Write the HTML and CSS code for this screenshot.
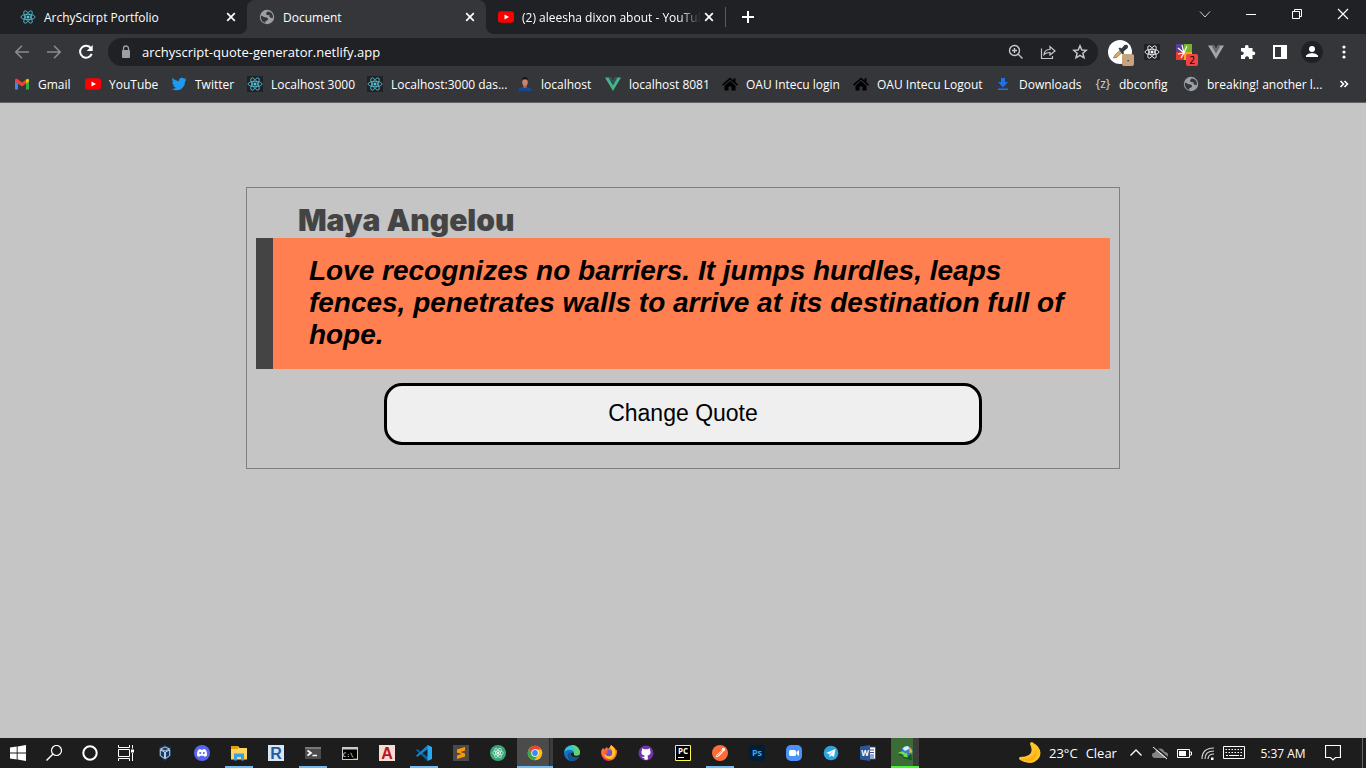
FILE: index.html
```html
<!DOCTYPE html>
<html lang="en">
<head>
<meta charset="utf-8">
<meta name="viewport" content="width=device-width, initial-scale=1">
<title>Document</title>
<link rel="stylesheet" href="styles.css">
</head>
<body>
<svg class="sprite" aria-hidden="true">
  <symbol id="react" viewBox="0 0 16 16"><g fill="none" stroke="currentColor" stroke-width=".8"><ellipse cx="8" cy="8" rx="7" ry="2.7"/><ellipse cx="8" cy="8" rx="7" ry="2.7" transform="rotate(60 8 8)"/><ellipse cx="8" cy="8" rx="7" ry="2.7" transform="rotate(120 8 8)"/></g><circle cx="8" cy="8" r="1.5" fill="currentColor"/></symbol>
  <symbol id="globe" viewBox="0 0 16 16"><circle cx="8" cy="8" r="7.2" fill="#9aa0a6"/><path d="M2.500 6.500Q5 8.500 7.500 8.500Q9.500 9 9 10.500Q8 12 6 12.500Q6 14 7.500 14.500Q2 13 1.700 8ZM8.500 2.500Q6.500 4 7.200 5.500Q8.500 6.500 10.500 6Q10 8 11.500 8.800L14 9Q14.500 6 12.500 4Q10.500 2 8.500 2.500Z" fill="#35363a"/></symbol>
  <symbol id="youtube" viewBox="0 0 16 16"><rect y="2.300" width="16" height="11.400" rx="3" fill="#f00"/><path d="M6.500 5.500 11 8 6.500 10.500Z" fill="#fff"/></symbol>
  <symbol id="close" viewBox="0 0 16 16"><path d="M4.200 4.200 11.800 11.800M11.800 4.200 4.200 11.800" stroke="#fff" stroke-width="1.700"/></symbol>
  <symbol id="house" viewBox="0 0 16 16"><path d="M8 1.500 0 8.500 1 9.700 8 3.800 15 9.700 16 8.500 13.500 6.300V2.300H11.500V4.500ZM8 5 2.500 9.700V14.500H6.500V10.500H9.500V14.500H13.500V9.700Z" fill="#000"/></symbol>
</svg>

<header class="browser">
  <div class="tabstrip">
    <div class="tab"><svg class="icon cyan"><use href="#react"/></svg><span class="tab-title">ArchyScirpt Portfolio</span><button class="tab-close" aria-label="Close ArchyScirpt Portfolio"><svg class="icon"><use href="#close"/></svg></button></div>
    <div class="tab active"><svg class="icon"><use href="#globe"/></svg><span class="tab-title">Document</span><button class="tab-close" aria-label="Close Document"><svg class="icon"><use href="#close"/></svg></button></div>
    <div class="tab"><svg class="icon"><use href="#youtube"/></svg><span class="tab-title faded">(2) aleesha dixon about - YouTub</span><button class="tab-close" aria-label="Close YouTube"><svg class="icon"><use href="#close"/></svg></button></div>
    <button class="new-tab" aria-label="New tab"><svg class="icon" viewBox="0 0 16 16"><path d="M8 2V14M2 8H14" stroke="#fff" stroke-width="2"/></svg></button>
    <div class="window-controls">
      <button aria-label="Search tabs"><svg class="icon" viewBox="0 0 16 16"><path d="M3 5.500 8 11 13 5.500" stroke="#ccc" fill="none"/></svg></button>
      <button aria-label="Minimize"><svg class="icon" viewBox="0 0 16 16"><path d="M3 8.500H13" stroke="#fff"/></svg></button>
      <button aria-label="Restore"><svg class="icon" viewBox="0 0 16 16"><path d="M3.500 5.500H10.500V12.500H3.500ZM5.500 5.500V3.500H12.500V10.500H10.500" stroke="#fff" fill="none"/></svg></button>
      <button aria-label="Close window"><svg class="icon" viewBox="0 0 16 16"><path d="M3 3 13 13M13 3 3 13" stroke="#fff" stroke-width="1.200"/></svg></button>
    </div>
  </div>

  <div class="toolbar">
    <div class="tools">
      <button aria-label="Back"><svg class="icon" viewBox="0 0 16 16"><path d="M15 8H2M8 1.800 1.800 8 8 14.200" stroke="#898b8f" stroke-width="1.600" fill="none"/></svg></button>
      <button aria-label="Forward"><svg class="icon" viewBox="0 0 16 16"><path d="M1 8H14M8 1.800 14.200 8 8 14.200" stroke="#898b8f" stroke-width="1.600" fill="none"/></svg></button>
      <button aria-label="Reload"><svg class="icon" viewBox="0 0 16 16"><path d="M13 4.300A6 6 0 1 0 13.700 9.800" stroke="#fff" stroke-width="2" fill="none"/><path d="M14.700 1V7H8.700Z" fill="#fff"/></svg></button>
    </div>
    <div class="omnibox">
      <svg class="icon lock" viewBox="0 0 16 16"><rect x="4" y="6" width="8" height="8" rx="1" fill="#9aa0a6"/><path d="M5.500 7V4.500A2.500 2.500 0 0 1 10.500 4.500V7" stroke="#9aa0a6" stroke-width="1.300" fill="none"/></svg>
      <input type="text" aria-label="Address" value="archyscript-quote-generator.netlify.app">
      <div class="tools">
        <button aria-label="Zoom"><svg class="icon" viewBox="0 0 16 16"><circle cx="6.500" cy="6.500" r="5" stroke="#c4c7ca" stroke-width="1.400" fill="none"/><path d="M10 10 14.500 14.500M4 6.500H9M6.500 4V9" stroke="#c4c7ca" stroke-width="1.400"/></svg></button>
        <button aria-label="Share"><svg class="icon" viewBox="0 0 16 16"><path d="M1.500 4.500V14.500H12.500V12M4 10.500Q4.500 5.500 10 5.500V2.500L15 7 10 11V8.500Q6 8.500 4 10.500Z" stroke="#c4c7ca" stroke-width="1.200" fill="none"/></svg></button>
        <button aria-label="Bookmark"><svg class="icon" viewBox="0 0 16 16"><path d="M8 1.800 9.800 6 14.300 6.300 10.900 9.300 12 13.800 8 11.400 4 13.800 5.100 9.300 1.700 6.300 6.200 6Z" stroke="#c4c7ca" stroke-width="1.500" fill="none"/></svg></button>
      </div>
    </div>
    <div class="tools">
      <button aria-label="Color picker"><svg class="icon big" viewBox="0 0 24 24"><circle cx="12" cy="12" r="12" fill="#fff"/><path d="M5.500 18 7 15 12 10.500 14 12.500 9 17.200Z" fill="#e8a94e" stroke="#777" stroke-width=".8"/><path d="M10.500 8.500 12 7.500 13.500 8.500 16.500 5Q19 4 20 6Q20.500 8 18 9.500L15.500 11.500 16 13.500 14.500 14.500Z" fill="#343b46"/></svg><span class="badge tan">·</span></button>
      <button aria-label="React tools"><svg class="icon tile white"><use href="#react"/></svg></button>
      <button aria-label="Color extension"><svg class="icon" viewBox="0 0 16 16"><path d="M0 0H8V8H0Z" fill="#564099"/><path d="M8 0H16V8H8Z" fill="#73b52b"/><path d="M0 8H8V16H0Z" fill="#e5383b"/><path d="M8 8H16V16H8Z" fill="#f5a623"/><path d="M8 9 2 4M8 9 6 1M8 9 11 2M8 9 2 10M8 9 5 14" stroke="#fff" stroke-width="1.200"/></svg><span class="badge red">2</span></button>
      <button aria-label="Vue tools"><svg class="icon" viewBox="0 0 16 16"><path d="M0 1.500H6L8 5 10 1.500H16L8 15Z" fill="#a5a5a5"/><path d="M3.500 1.500H6L8 5 10 1.500H12.500L8 9.500Z" fill="#686868"/></svg></button>
      <button aria-label="Extensions"><svg class="icon" viewBox="0 0 16 16"><path d="M1 4H5Q4.500 1 6.800 1Q9 1 8.500 4H12.500V7.500Q15.300 7 15.300 9.200Q15.300 11.500 12.500 11V15H9Q9.200 12.300 7 12.300Q4.800 12.300 5 15H1V11Q3.700 11.300 3.700 9.200Q3.700 7 1 7.500Z" fill="#fff"/></svg></button>
      <button aria-label="Side panel"><svg class="icon" viewBox="0 0 16 16"><path fill-rule="evenodd" d="M1 1H15V15H1ZM3 3V13H9V3Z" fill="#fff"/></svg></button>
      <button aria-label="Profile"><svg class="icon profile" viewBox="0 0 22 22"><circle cx="11" cy="11" r="11" fill="#202124"/><circle cx="11" cy="8" r="3" fill="#fff"/><path d="M5 16V14.500Q7 12 11 12T17 14.500V16Z" fill="#fff"/></svg></button>
      <button aria-label="Menu"><svg class="icon" viewBox="0 0 16 16"><g fill="#fff"><circle cx="8" cy="3" r="1.600"/><circle cx="8" cy="8" r="1.600"/><circle cx="8" cy="13" r="1.600"/></g></svg></button>
    </div>
  </div>

  <nav class="bookmarks" aria-label="Bookmarks">
    <a href="#"><svg class="icon" viewBox="0 0 16 16"><path d="M1 4V13.500H4V7Z" fill="#4285f4"/><path d="M12 7V13.500H15V4Z" fill="#34a853"/><path d="M1 4Q1.500 1.500 3.500 3L8 6.500 12 3.500V7.500L8 10.500 1 5.500Z" fill="#ea4335"/><path d="M12 3.500Q15 1.500 15 4.500V5.500L12 7.500Z" fill="#fbbc04"/></svg>Gmail</a>
    <a href="#"><svg class="icon"><use href="#youtube"/></svg>YouTube</a>
    <a href="#"><svg class="icon" viewBox="0 0 16 16"><path d="M1.500 2Q4.500 5.300 8 5.300Q7.700 2 11 1.800Q12.300 1.800 13.200 2.700L15.200 2 14 4 15.500 3.600 14 5.500Q14 10 10.500 12.800Q6 15.800.5 13Q3 13.200 5 11.800Q2.800 11.500 2.200 9.500H3.500Q1 8.500 1 6L2.300 6.400Q.3 4.500 1.500 2Z" fill="#1d9bf0"/></svg>Twitter</a>
    <a href="#"><svg class="icon tile cyan"><use href="#react"/></svg>Localhost 3000</a>
    <a href="#"><svg class="icon tile cyan"><use href="#react"/></svg>Localhost:3000 das...</a>
    <a href="#"><svg class="icon" viewBox="0 0 16 16"><path d="M1 15Q1 11.500 5.500 11H10Q15 11.500 15 15Z" fill="#17488d"/><path d="M6 8H10V11L8 12.500 6 11Z" fill="#a85f4c"/><ellipse cx="8" cy="6" rx="2.800" ry="3.800" fill="#c9856b"/><path d="M5 5Q4.500 1 8 1Q11.500 1 11 5L10 3.500H6Z" fill="#19161e"/></svg>localhost</a>
    <a href="#"><svg class="icon" viewBox="0 0 16 16"><path d="M0 1.500H6L8 5 10 1.500H16L8 15Z" fill="#41b883"/><path d="M3.500 1.500H6L8 5 10 1.500H12.500L8 9.500Z" fill="#35495e"/></svg>localhost 8081</a>
    <a href="#"><svg class="icon"><use href="#house"/></svg>OAU Intecu login</a>
    <a href="#"><svg class="icon"><use href="#house"/></svg>OAU Intecu Logout</a>
    <a href="#"><svg class="icon" viewBox="0 0 16 16"><path d="M6 2H10V6H13L8 11.500 3 6H6ZM3 12.500H13V14H3Z" fill="#1a73e8"/></svg>Downloads</a>
    <a href="#"><svg class="icon" viewBox="0 0 16 16"><text x="8" y="12" text-anchor="middle" class="glyph-z">{z}</text></svg>dbconfig</a>
    <a href="#"><svg class="icon"><use href="#globe"/></svg>breaking! another l...</a>
    <button aria-label="More bookmarks"><svg class="icon" viewBox="0 0 16 16"><path d="M3.500 5 6.500 8 3.500 11M7.500 5 10.500 8 7.500 11" stroke="#fff" stroke-width="1.600" fill="none"/></svg></button>
  </nav>
</header>

<main class="page">
  <section class="card">
    <h1 class="author">Maya Angelou</h1>
    <blockquote class="quote">Love recognizes no barriers. It jumps hurdles, leaps fences, penetrates walls to arrive at its destination full of hope.</blockquote>
    <button class="change">Change Quote</button>
  </section>
</main>

<footer class="taskbar">
  <div class="system">
    <button aria-label="Start"><svg class="icon" viewBox="0 0 16 16"><path d="M0 2.500 6.700 1.500V7.600H0ZM7.600 1.400 16 0V7.600H7.600ZM0 8.400H6.700V14.500L0 13.500ZM7.600 8.400H16V16L7.600 14.600Z" fill="#fff"/></svg></button>
    <button aria-label="Search"><svg class="icon" viewBox="0 0 16 16"><circle cx="10.500" cy="5.500" r="5" stroke="#fff" stroke-width="1.200" fill="none"/><path d="M7 9 .5 15.500" stroke="#fff" stroke-width="1.400"/></svg></button>
    <button aria-label="Cortana"><svg class="icon" viewBox="0 0 16 16"><circle cx="8" cy="8" r="6.700" stroke="#fff" stroke-width="2" fill="none"/></svg></button>
    <button aria-label="Task view"><svg class="icon" viewBox="0 0 16 16"><path d="M.5 0V2.500H11.500V0M.5 16V13.500H11.500V16M.5 4.500H11.500V11.500H.5ZM14.500 0V3.500M14.500 8V16" stroke="#fff" fill="none"/><path d="M13 4.500H16V7.500H13Z" fill="#fff"/></svg></button>
  </div>
  <div class="apps">
    <button aria-label="VirtualBox"><svg class="icon" viewBox="0 0 16 16"><path d="M8 0 14 2.500V11L8 16 2 11V2.500Z" fill="#173b68"/><path d="M8 2 12.500 4 8 6 3.500 4ZM3.300 5 7.500 7V13.500L3.300 10.500ZM12.700 5 8.500 7V13.500L12.700 10.500Z" stroke="#e9f2fa" fill="#173b68" stroke-width=".8"/></svg></button>
    <button aria-label="Discord"><svg class="icon" viewBox="0 0 16 16"><circle cx="8" cy="8" r="8" fill="#5865f2"/><path d="M4 5Q5 4.200 6.500 4L7 4.700H9L9.500 4Q11 4.200 12 5Q13.300 8 13 10.500Q12 11.700 10.500 11.800L9.800 10.800H6.200L5.500 11.800Q4 11.700 3 10.500Q2.700 8 4 5Z" fill="#fff"/><circle cx="6.200" cy="8" r="1.100" fill="#5865f2"/><circle cx="9.800" cy="8" r="1.100" fill="#5865f2"/></svg></button>
    <button class="running" aria-label="File Explorer"><svg class="icon" viewBox="0 0 16 16"><path d="M0 1H7L8.500 3H16V14.500H0Z" fill="#ffd45f"/><path d="M0 1H7V4H0Z" fill="#e6a100"/><path d="M3 8.500H13V15.500H10V12H6V15.500H3Z" fill="#3c9fe5"/></svg></button>
    <button aria-label="R"><svg class="icon" viewBox="0 0 16 16"><path d="M0 0H16V16H0Z" fill="#dbe5f3"/><text x="8" y="14" text-anchor="middle" class="letter" fill="#205d9d">R</text></svg></button>
    <button class="running" aria-label="Terminal"><svg class="icon" viewBox="0 0 16 16"><path d="M0 2H16V14H0Z" fill="#4b4b4b"/><path d="M0 2H16V4H0Z" fill="#777"/><path d="M2.500 5.500 6 8 2.500 10.500M7.500 10.500H12" stroke="#fff" stroke-width="1.700" fill="none"/></svg></button>
    <button aria-label="Command Prompt"><svg class="icon" viewBox="0 0 16 16"><path d="M0 2H16V15H0Z" fill="#c6ccd1"/><path d="M1 4.500H15V14H1Z" fill="#000"/><text x="8" y="11.500" text-anchor="middle" class="cmd">C:\_</text></svg></button>
    <button aria-label="AutoCAD"><svg class="icon" viewBox="0 0 16 16"><path d="M0 0H16V16H0Z" fill="#f4ddd3"/><text x="8" y="14" text-anchor="middle" class="letter" fill="#b91521">A</text></svg></button>
    <button class="running" aria-label="Visual Studio Code"><svg class="icon" viewBox="0 0 16 16"><path d="M1.200 4 11.800 12V16L0 5.200Z" fill="#0065a9"/><path d="M0 10.800 11.800 0V4L1.200 12Z" fill="#1686d0"/><path d="M11.500 0 16 2V14L11.500 16Z" fill="#29a9f2"/></svg></button>
    <button aria-label="Sublime Text"><svg class="icon" viewBox="0 0 16 16"><path d="M0 0H16V16H0Z" fill="#4a4a4a"/><path d="M4 4.500 12 2V5.500L7.500 7 12 8.500V11.500L4 14V10.500L8.500 9 4 7.500Z" fill="#ff9800"/></svg></button>
    <button aria-label="Atom"><svg class="icon atom" viewBox="0 0 16 16"><circle cx="8" cy="8" r="8" fill="#36a878"/><svg x="2" y="2" width="12" height="12"><use href="#react"/></svg></svg></button>
    <button class="current" aria-label="Google Chrome"><svg class="icon" viewBox="0 0 16 16"><circle cx="8" cy="8" r="7.300" fill="#fbc116"/><path d="M1.700 4.300A7.300 7.300 0 0 1 14.300 4.400H8L5 10Z" fill="#ea4335"/><path d="M1.700 4.300A7.300 7.300 0 0 0 7.300 15.300L11 10 5 10Z" fill="#34a853"/><circle cx="8" cy="8" r="3.700" fill="#fff"/><circle cx="8" cy="8" r="2.900" fill="#4285f4"/></svg></button>
    <button aria-label="Edge"><svg class="icon" viewBox="0 0 16 16"><circle cx="8" cy="8" r="8" fill="#1672c2"/><path d="M.2 7A8 8 0 0 1 16 7.500Q15.500 11 12 10.500Q9 10 10 8Q9 4.500 5 4.800Q2 5 .2 7Z" fill="#36c7d5"/><path d="M9 0A8 8 0 0 1 16 7.500Q15.500 11 12 10.500Q9 10 10 8Q12 3 7 0Z" fill="#62d36d"/><path d="M6.500 7Q5.500 12.500 10.500 13Q13 13 15 11.500Q12.500 16 8.500 16Q3 15 3.500 10Q4 7.500 6.500 7Z" fill="#135293"/><path d="M7 8.500Q8 7 10 8Q8.800 10.500 12 11Q14 11 15.500 10L15 11.500Q12 13 9.500 12Q6.500 11 7 8.500Z" fill="#1d1d1d"/></svg></button>
    <button aria-label="Firefox"><svg class="icon" viewBox="0 0 16 16"><path d="M2 3 3.500 4.500Q5 2 6 2L7 4Q9 2.500 10 0Q14.500 3 15 5L16 5Q16.500 11 13 14Q8 17.500 3 14Q-1 10 .5 5Z" fill="#ff712f"/><path d="M10 0Q14.500 3 14.500 8Q13 14 8 14Q4 13 3 9Q6 12 10 10Q13 6 9 3Z" fill="#ffc928"/><circle cx="8" cy="8" r="3.200" fill="#7651c7"/><path d="M3 6Q5 5 7 6L6 8Q5 10 3 9Z" fill="#ff5c34"/><path d="M1 10Q4 16 10 14Q5 18 2 13Z" fill="#e31b70"/></svg></button>
    <button aria-label="GitHub"><svg class="icon" viewBox="0 0 16 16"><circle cx="8" cy="8" r="7.500" fill="#7036a5"/><path d="M4.200 3.200 6.200 4.200H9.800L11.800 3.200Q12.200 4.200 12 5.200Q13.200 7 12.200 9Q11.300 10.300 9.500 10.600L9.800 11.500V14.500Q8 15 6.300 14.500V13Q4.700 13.300 3.800 11.500Q5.300 12.300 6.400 11.800L6.600 10.600Q4.600 10.300 3.800 9Q2.800 7 4 5.200Q3.800 4.200 4.200 3.200Z" fill="#fff"/></svg></button>
    <button aria-label="PyCharm"><svg class="icon" viewBox="0 0 16 16"><path d="M.5.5H15.500V15.500H.5Z" fill="#000" stroke="#fcf84a"/><text x="8" y="9" text-anchor="middle" class="small-letters">PC</text><path d="M3 12.500H9" stroke="#fff"/></svg></button>
    <button class="running" aria-label="Postman"><svg class="icon" viewBox="0 0 16 16"><circle cx="8" cy="8" r="8" fill="#ff6c37"/><path d="M3.500 12.500 5 9.500 10 5 11.500 6.500 7 11.200Z" fill="#fff"/><circle cx="11.500" cy="4.500" r="1.700" fill="#fff"/><path d="M5 11 10.500 5.500" stroke="#ff6c37" stroke-width=".7"/></svg></button>
    <button aria-label="Photoshop"><svg class="icon" viewBox="0 0 16 16"><rect width="16" height="16" rx="2" fill="#001e36"/><text x="8" y="11" text-anchor="middle" class="ps">Ps</text></svg></button>
    <button aria-label="Zoom"><svg class="icon" viewBox="0 0 16 16"><rect width="16" height="16" rx="5" fill="#4b91fa"/><rect x="3" y="5" width="7" height="6" rx="1.500" fill="#fff"/><path d="M10.500 7 13 5V11L10.500 9Z" fill="#fff"/></svg></button>
    <button aria-label="Telegram"><svg class="icon" viewBox="0 0 16 16"><circle cx="8" cy="8" r="7.300" fill="#2ba4df"/><path d="M3 8 12.500 4 11 12 8.500 10.500 6.500 12V9Z" fill="#fff"/><path d="M6.500 9 11 5.500 7.500 9.800 6.500 12Z" fill="#a9cbe2"/></svg></button>
    <button aria-label="Word"><svg class="icon" viewBox="0 0 16 16"><path d="M9 2H15.500V14H9Z" fill="#fff" stroke="#2b579a"/><path d="M10 5H14M10 7.500H14M10 10H14M10 12H14" stroke="#2b579a"/><path d="M0 1.500 10 0V16L0 14.500Z" fill="#2b579a"/><text x="5" y="11" text-anchor="middle" class="word">W</text></svg></button>
    <button class="download" aria-label="Download Manager"><svg class="icon" viewBox="0 0 16 16"><circle cx="10" cy="6.500" r="5.500" fill="#2f7fd0"/><path d="M5.500 3.500Q8 .3 11.500 1.200L12 4 8 6Z" fill="#dbeefa"/><path d="M12 2Q15.500 4.500 15.300 7.500L12.500 8Z" fill="#f2b136"/><path d="M.5 8.500Q5 4.500 8.500 8.500L10 7.500 10.500 12.500 5.500 12 7 10.500Q4 7.500 .5 8.500Z" fill="#7ddb3f"/><path d="M.5 9.500Q4 8 6.500 11L5 12.500 15 15.500 14 9 11.500 10.500 11 13Z" fill="#12591f"/></svg></button>
  </div>
  <div class="tray">
    <button class="weather"><svg class="moon" viewBox="0 0 22 22"><path d="M13 0Q25 7 20 16Q13 25 1 18Q-1 16 1 15Q17 15 11 2Q11 0 13 0Z" fill="#ffc328"/><path d="M1 17Q14 18 18 7Q19 20 8 19Z" fill="#ffae12"/></svg><span>23°C</span><span>Clear</span></button>
    <button aria-label="Hidden icons"><svg class="icon" viewBox="0 0 16 16"><path d="M2.500 10.500 8 5 13.500 10.500" stroke="#fff" stroke-width="1.300" fill="none"/></svg></button>
    <button aria-label="OneDrive"><svg class="icon" viewBox="0 0 16 16"><path d="M3 13Q0 12.500 0 10Q0 7.500 3 7.500Q4 3.500 8 3.500Q11.500 3.500 12.500 7Q16 7 16 10Q16 13 13 13Z" fill="#858585"/><path d="M2 1 16 13" stroke="#1e1e1e" stroke-width="1.500"/><path d="M1 2 15 14" stroke="#fff"/></svg></button>
    <button aria-label="Battery"><svg class="icon" viewBox="0 0 16 16"><path d="M1.500 4.500H13.500V12.500H1.500ZM14 7H15.500V10H14" stroke="#fff" fill="none"/><path d="M3 6H10V11H3Z" fill="#fff"/></svg></button>
    <button aria-label="Wi-Fi"><svg class="icon" viewBox="0 0 16 16"><path d="M2 14Q2 3 14 3M5 14Q5 6 14 6M8 14Q8 9 14 9" stroke="#d6d6d6" stroke-width="1.200" fill="none"/><path d="M11 12.500H13.500V15H11Z" fill="#fff"/></svg></button>
    <button class="keyboard" aria-label="Keyboard"><svg viewBox="0 0 24 14"><path d="M1.500.5H22.500V12.500H1.500Z" stroke="#fff" fill="none"/><path d="M3.500 3.500H21M3.500 6.500H21" stroke="#fff" stroke-dasharray="1.500 1.500"/><path d="M4 9.500H6M7 9.500H17M18 9.500H20" stroke="#fff"/></svg></button>
    <button class="clock">5:37 AM</button>
    <button class="notifications" aria-label="Notifications"><svg class="icon" viewBox="0 0 16 16"><path d="M.5.500H15.500V12.500H10.500L8 15 5.500 12.500H.5Z" stroke="#fff" fill="none" stroke-width="1.200"/></svg></button>
  </div>
</footer>
</body>
</html>
```
FILE: styles.css
```css
* {
  box-sizing: border-box;
}

body {
  margin: 0;
  min-height: 100vh;
  display: flex;
  flex-direction: column;
  background: #c5c5c5;
  font-family: "Open Sans", "Noto Sans", sans-serif;
  font-size: 12px;
}

button {
  border: 0;
  padding: 0;
  margin: 0;
  background: none;
  color: inherit;
  font: inherit;
  display: flex;
  align-items: center;
  justify-content: center;
}

svg {
  display: block;
}

.sprite {
  display: none;
}

.icon {
  width: 16px;
  height: 16px;
  flex: none;
}

.cyan {
  color: #55c7dc;
}

.white {
  color: #fff;
}

.tile {
  background: #202124;
}

/* Browser chrome */
.browser {
  background: #35363a;
  color: #fff;
  border-bottom: 1px solid #626366;
}

.tabstrip {
  height: 34px;
  display: flex;
  padding-left: 8px;
  background: #202124;
}

.tab {
  position: relative;
  width: 239px;
  display: flex;
  align-items: center;
  padding: 0 8px 0 12px;
}

.tab.active {
  background: #35363a;
  border-radius: 8px 8px 0 0;
}

.tab.active::before,
.tab.active::after {
  content: "";
  position: absolute;
  bottom: 0;
  width: 8px;
  height: 8px;
}

.tab.active::before {
  right: 100%;
  background: radial-gradient(circle at top left, transparent 8px, #35363a 8px);
}

.tab.active::after {
  left: 100%;
  background: radial-gradient(circle at top right, transparent 8px, #35363a 8px);
}

.tab-title {
  flex: 1;
  min-width: 0;
  padding-left: 8px;
  white-space: nowrap;
}

.faded {
  mask-image: linear-gradient(to right, #000 88%, transparent);
}

.new-tab {
  width: 46px;
  position: relative;
}

.new-tab::before {
  content: "";
  position: absolute;
  left: 0;
  width: 1px;
  height: 20px;
  background: #5b5d60;
}

.window-controls {
  margin-left: auto;
  height: 28px;
  display: flex;
}

.window-controls button {
  width: 46px;
}

.toolbar {
  height: 36px;
  display: flex;
  align-items: center;
  gap: 6px;
  padding: 0 6px;
}

.tools {
  display: flex;
}

.tools button {
  position: relative;
  width: 32px;
  height: 28px;
}

.omnibox {
  flex: 1;
  height: 28px;
  display: flex;
  align-items: center;
  padding: 0 2px 0 10px;
  border-radius: 14px;
  background: #202124;
}

.omnibox input {
  flex: 1;
  min-width: 0;
  margin-left: 8px;
  padding: 0;
  border: 0;
  outline: 0;
  background: none;
  color: #fff;
  font: 13px "Open Sans", sans-serif;
}

.big {
  width: 24px;
  height: 24px;
}

.profile {
  width: 22px;
  height: 22px;
}

.badge {
  position: absolute;
  right: 2px;
  bottom: 0;
  width: 12px;
  height: 12px;
  border-radius: 2px;
  color: #000;
  font-size: 10px;
  line-height: 12px;
  text-align: center;
}

.tan {
  background: #c8a37b;
}

.red {
  background: #ef4444;
}

.bookmarks {
  height: 32px;
  display: grid;
  grid-template-columns: 71px 86px 76px 120px 150px 88px 117px 131px 142px 100px 88px 1fr 46px;
  align-items: center;
  padding: 0 0 4px 14px;
}

.bookmarks a {
  display: flex;
  align-items: center;
  gap: 8px;
  color: #fff;
  white-space: nowrap;
  text-decoration: none;
}

.glyph-z {
  font: 12px "Noto Sans", sans-serif;
  fill: #ccc;
}

/* Quote page */
.page {
  flex: 1;
  padding-top: 84px;
}

.card {
  width: 64%;
  margin: 0 auto;
  padding: 14px 9px 23px;
  border: 1px solid #808080;
}

.author {
  margin: 0 0 0 42px;
  color: #444;
  font: 900 30px/36px "Arial Black", Inter, sans-serif;
}

.quote {
  margin: 0;
  padding: 17px 36px 18px;
  border-left: 17px solid #444;
  background: #ff7f50;
  color: #000;
  font: italic bold 28px/32px Arial, "Liberation Sans", sans-serif;
}

.change {
  width: 70%;
  height: 62px;
  margin: 14px auto 0;
  padding-bottom: 2px;
  border: 3px solid #000;
  border-radius: 18px;
  background: #efefef;
  color: #000;
  font: 23px Arial, "Liberation Sans", sans-serif;
}

/* Taskbar */
.taskbar {
  height: 30px;
  display: flex;
  gap: 3px;
  background: #1d1d1d;
  color: #fff;
}

.system,
.apps,
.tray {
  display: flex;
}

.system button,
.apps button {
  width: 36px;
  height: 30px;
}

.apps {
  gap: 1px;
}

.apps .running {
  background: linear-gradient(#76b9ed, #76b9ed) center bottom / 28px 2px no-repeat;
}

.apps .current {
  padding-top: 2px;
  background: linear-gradient(to right, #4b4b4b 32px, #292929 32px, #292929 33px, #3c3c3c 33px);
  border-bottom: 2px solid #76b9ed;
}

.apps .download {
  width: 28px;
  margin-left: 4px;
  padding-top: 2px;
  background: linear-gradient(to right, #3b6c37 22px, #3c3c3c 22px);
  border-bottom: 2px solid #4cf03a;
}

.atom {
  color: #fff;
}

.letter {
  font: bold 16px "Liberation Sans", sans-serif;
}

.cmd {
  font: 6px "DejaVu Sans Mono", monospace;
  fill: #fff;
}

.small-letters {
  font: bold 8px "Open Sans", sans-serif;
  fill: #fff;
}

.ps {
  font: bold 9px "Open Sans", sans-serif;
  fill: #31a8ff;
}

.word {
  font: bold 8px "Open Sans", sans-serif;
  fill: #fff;
}

.tray {
  margin-left: auto;
  margin-right: 3px;
  padding-right: 14px;
  border-right: 1px solid #666;
}

.tray button {
  width: 24px;
}

.tray .weather {
  width: 104px;
  gap: 8px;
  margin-right: 1px;
  justify-content: flex-start;
  font-size: 13px;
}

.moon {
  width: 22px;
  height: 22px;
}

.tray .keyboard {
  width: 28px;
}

.keyboard svg {
  width: 24px;
  height: 14px;
}

.tray .clock {
  width: 70px;
  white-space: nowrap;
}

.tray .notifications {
  width: 30px;
}
```
